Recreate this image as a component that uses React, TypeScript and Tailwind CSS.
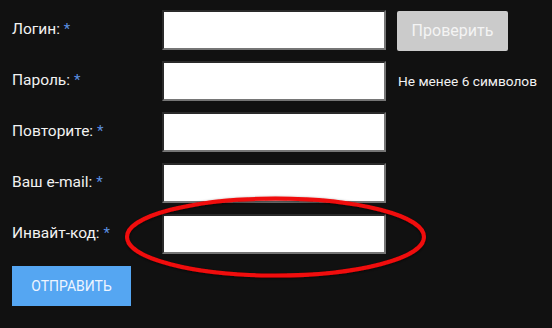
import React from "react";

const rows = [
  { label: "Логин:", extra: "button" },
  { label: "Пароль:", extra: "hint" },
  { label: "Повторите:", extra: null },
  { label: "Ваш e-mail:", extra: null },
  { label: "Инвайт-код:", extra: null },
];

export default function App() {
  return (
    <div
      className="relative w-[552px] h-[328px] bg-[#111111] overflow-hidden"
      style={{ fontFamily: "Roboto, 'Liberation Sans', sans-serif" }}
    >
      <div className="flex flex-col gap-[11px] pl-[12px] pt-[10px]">
        {rows.map((r) => (
          <div key={r.label} className="flex items-center h-[40px]">
            <div className="w-[150px] text-[15.5px] text-[#f2f2f2] leading-none">
              {r.label} <span className="text-[#5a8fe0] text-[15px]">*</span>
            </div>
            <div className="w-[224px] h-[40px] bg-white border-2 border-t-[#2a2a2a] border-l-[#2a2a2a] border-b-[#767676] border-r-[#767676]" />
            {r.extra === "button" && (
              <div className="ml-[11px] mt-[2px] w-[111px] h-[40px] rounded-[2px] bg-[#cbcbcb] text-[#f4f4f4] text-[16px] flex items-center justify-center">
                Проверить
              </div>
            )}
            {r.extra === "hint" && (
              <div className="ml-[12px] text-[13.7px] text-[#f2f2f2]">Не менее 6 символов</div>
            )}
          </div>
        ))}
        <div className="mt-[1px] w-[119px] h-[40px] bg-[#55a6f2] text-[#eef5ff] text-[14px] flex items-center justify-center">
          ОТПРАВИТЬ
        </div>
      </div>
      <svg className="absolute left-0 top-0" width="552" height="328">
        <defs>
          <filter id="sh" x="-10%" y="-30%" width="120%" height="160%">
            <feDropShadow dx="0" dy="1" stdDeviation="1.5" floodColor="#000" floodOpacity="0.6" />
          </filter>
        </defs>
        <ellipse cx="275.5" cy="237" rx="148.5" ry="38.5" fill="none" stroke="#f00a0a" strokeWidth="4" filter="url(#sh)" />
      </svg>
    </div>
  );
}
